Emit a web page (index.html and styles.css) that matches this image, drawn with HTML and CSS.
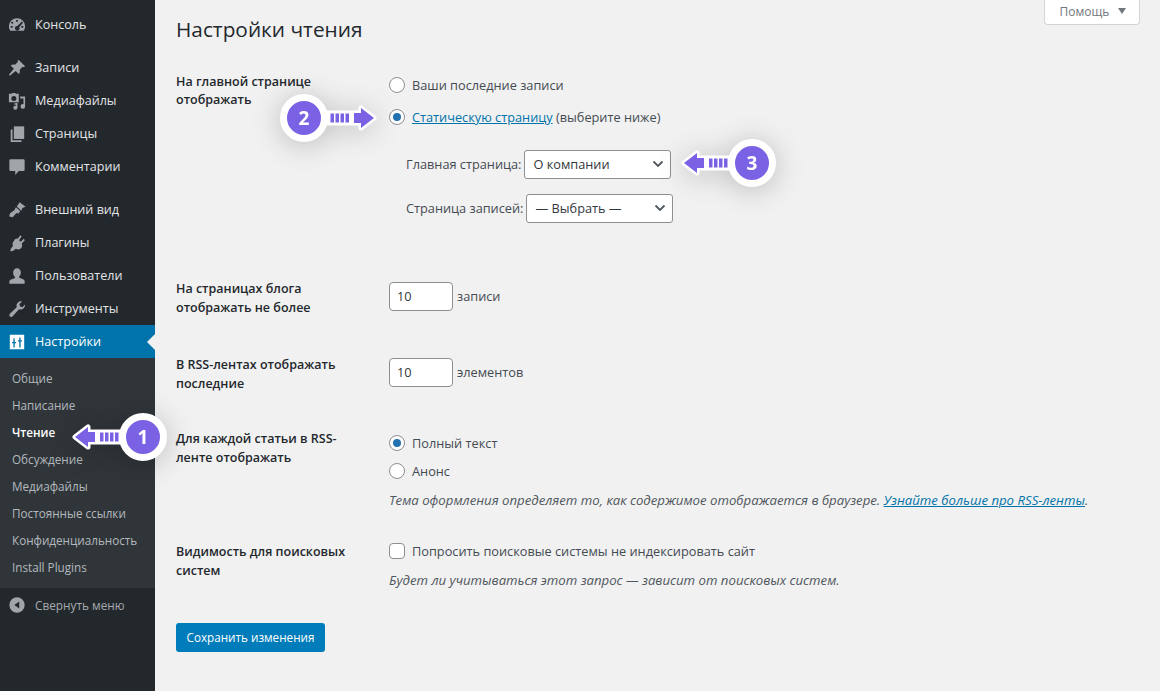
FILE: index.html
```html
<!doctype html>
<html lang="ru">
<head>
  <meta charset="UTF-8">
  <title>Настройки чтения</title>
  <link rel="stylesheet" href="styles.css">
</head>
<body>
  <div class="page">
    <aside class="sidebar">
      <ul class="menu">
        <li class="menu-item first">
          <svg class="menu-icon" viewBox="0 0 20 20"><path fill-rule="evenodd" d="M10 2.500a9 9 0 0 0-9 9c0 2 .6 3.700 1.600 5h14.800c1-1.300 1.600-3 1.600-5a9 9 0 0 0-9-9zM9 4.500h2v2H9zM4.500 6l1.500 1.500-1.300 1.300-1.500-1.500zm11 0l1.300 1.300-4.300 5.200a2.500 2.500 0 1 1-2.200-1.400zM3 11h2.200v2H3zm11.800 0H17v2h-2.200z"/></svg>
          <span>Консоль</span>
        </li>
        <li class="menu-item sep">
          <svg class="menu-icon" viewBox="0 0 20 20"><path d="M12 1l7 7-1.500 1.200-1.200-.5-3.300 3.300c.5 2 .1 3.700-1 4.800l-3.500-3.500L2 18.500 1 17.500l5.500-6.700L3 7.300c1.100-1.100 2.800-1.500 4.800-1l3.300-3.300-.5-1.200z"/></svg>
          <span>Записи</span>
        </li>
        <li class="menu-item">
          <svg class="menu-icon" viewBox="0 0 20 20"><path fill-rule="evenodd" d="M1 2h3l1-1h3l1 1h3v9.500H1zm5.500 2.500a2.800 2.800 0 1 0 0 5.600 2.800 2.800 0 0 0 0-5.600z"/><path d="M13.500 5H19v11a2.500 2.500 0 1 1-1.800-2.400V7.200h-3.700zM7 12.800l3.500-.8v5.500a2.300 2.300 0 1 1-1.800-2.200v-1.500L7 14.200z"/></svg>
          <span>Медиафайлы</span>
        </li>
        <li class="menu-item">
          <svg class="menu-icon" viewBox="0 0 20 20"><path d="M6.500 1.500H18v14H6.500z"/><path d="M3 5h2v12h10v1.800H3z"/></svg>
          <span>Страницы</span>
        </li>
        <li class="menu-item">
          <svg class="menu-icon" viewBox="0 0 20 20"><path d="M3 1.500h14a1.500 1.500 0 0 1 1.500 1.500v10a1.500 1.500 0 0 1-1.500 1.500h-5L8 19v-4.500H3A1.500 1.500 0 0 1 1.500 13V3A1.500 1.500 0 0 1 3 1.500z"/></svg>
          <span>Комментарии</span>
        </li>
        <li class="menu-item sep">
          <svg class="menu-icon" viewBox="0 0 20 20"><path d="M13 1.500l6.500 5-3.500 1.200-1.200 3-5-4.500zM8.800 7l4.700 4.200-1.700 2.800-2.500-.7-4 4.700-4-.8 1-3.700 4.700-3.200z"/></svg>
          <span>Внешний вид</span>
        </li>
        <li class="menu-item">
          <svg class="menu-icon" viewBox="0 0 20 20"><path d="M13.500 1.500l1.700 1.200-3 4.300 2 1.500 3.300-3.200 1.200 1.700-3.500 3.500c1 2.200.5 4.200-1 5.500-1.500 1.300-3.500 1.500-5.500.5l-3.200 2.500-3 .3.500-3 2.500-3c-.8-2.200-.5-4 1-5.500C7.900 5 9.500 4.700 11 5.200z"/></svg>
          <span>Плагины</span>
        </li>
        <li class="menu-item">
          <svg class="menu-icon" viewBox="0 0 20 20"><path d="M10 1.500a4.300 4.300 0 0 1 4.300 4.800c0 2-1 3.500-2.100 4.400v1l5.100 2.100c.8.400 1.200 1 1.200 1.700V18.500H1.500v-2.500c0-.7.400-1.300 1.200-1.700l5.100-2.100v-1C6.700 9.800 5.700 8.300 5.700 6.300A4.300 4.300 0 0 1 10 1.500z"/></svg>
          <span>Пользователи</span>
        </li>
        <li class="menu-item">
          <svg class="menu-icon" viewBox="0 0 20 20"><path d="M19 5.500a5 5 0 0 1-6.800 4.700l-7 7.800a2.100 2.100 0 0 1-3.200-2.800L9.700 8a5 5 0 0 1 6-6.500L12.700 4.700l.7 2.600 2.600.7 2.900-3z"/></svg>
          <span>Инструменты</span>
        </li>
        <li class="menu-item current">
          <svg class="menu-icon" viewBox="0 0 20 20"><path fill-rule="evenodd" d="M2 2h16v16H2zM4.500 10v1.500H6V16h1.500v-4.500H9V10H7.500V6H6v4zM11 8v1.500h1.500V16H14V9.500h1.500V8H14V5h-1.500v3z"/></svg>
          <span>Настройки</span>
        </li>
      </ul>
      <ul class="submenu">
        <li>Общие</li>
        <li>Написание</li>
        <li class="active">Чтение</li>
        <li>Обсуждение</li>
        <li>Медиафайлы</li>
        <li>Постоянные ссылки</li>
        <li>Конфиденциальность</li>
        <li>Install Plugins</li>
      </ul>
      <div class="collapse">
        <svg class="menu-icon" viewBox="0 0 20 20"><path fill-rule="evenodd" d="M10 1.500a8.500 8.500 0 1 1 0 17 8.500 8.500 0 0 1 0-17zM12.500 6L7 10l5.500 4z"/></svg>
        <span>Свернуть меню</span>
      </div>
    </aside>

    <main class="content">
      <div class="help-bar"><button class="help-btn">Помощь <i class="caret"></i></button></div>
      <h1 class="title">Настройки чтения</h1>

      <section class="row row-front">
        <div class="row-label"><div>На главной странице</div><div>отображать</div></div>
        <div class="row-field">
          <label class="choice"><i class="radio"></i>Ваши последние записи</label>
          <label class="choice"><i class="radio on"></i><span><a href="#">Статическую страницу</a> (выберите ниже)</span></label>
          <div class="pick first-pick">Главная страница: <span class="select">О компании<svg viewBox="0 0 12 8"><path d="M1.500 1.500L6 6l4.500-4.500"/></svg></span></div>
          <div class="pick">Страница записей: <span class="select">— Выбрать —<svg viewBox="0 0 12 8"><path d="M1.500 1.500L6 6l4.500-4.500"/></svg></span></div>
        </div>
      </section>

      <section class="row row-posts">
        <div class="row-label">На страницах блога отображать не более</div>
        <div class="row-field inline"><span class="num">10</span>записи</div>
      </section>

      <section class="row row-rss">
        <div class="row-label">В RSS-лентах отображать последние</div>
        <div class="row-field inline"><span class="num">10</span>элементов</div>
      </section>

      <section class="row row-feed">
        <div class="row-label">Для каждой статьи в RSS-ленте отображать</div>
        <div class="row-field">
          <label class="choice"><i class="radio on"></i>Полный текст</label>
          <label class="choice"><i class="radio"></i>Анонс</label>
          <p class="note">Тема оформления определяет то, как содержимое отображается в браузере. <a href="#">Узнайте больше про RSS-ленты</a>.</p>
        </div>
      </section>

      <section class="row row-seo">
        <div class="row-label">Видимость для поисковых систем</div>
        <div class="row-field">
          <label class="choice"><i class="check"></i>Попросить поисковые системы не индексировать сайт</label>
          <p class="note">Будет ли учитываться этот запрос — зависит от поисковых систем.</p>
        </div>
      </section>

      <button class="save">Сохранить изменения</button>
    </main>

    <div class="mark mark-1">
      <svg class="arrow" viewBox="0 0 52 30"><path class="halo" d="M4 15L17 5v5h35v10H17v5z"/><path class="fill" d="M4 15L17 5v5h7v10h-7v5zM29 10.500h3.500v9H29zM34 10.500h3.500v9H34zM39 10.500h3.500v9H39zM44 10.500h3.500v9H44z"/></svg>
      <b class="badge">1</b>
    </div>
    <div class="mark mark-2">
      <b class="badge">2</b>
      <svg class="arrow arrow-right" viewBox="0 0 52 30"><path class="halo" d="M4 15L17 5v5h35v10H17v5z"/><path class="fill" d="M4 15L17 5v5h7v10h-7v5zM29 10.500h3.500v9H29zM34 10.500h3.500v9H34zM39 10.500h3.500v9H39zM44 10.500h3.500v9H44z"/></svg>
    </div>
    <div class="mark mark-3">
      <svg class="arrow" viewBox="0 0 52 30"><path class="halo" d="M4 15L17 5v5h35v10H17v5z"/><path class="fill" d="M4 15L17 5v5h7v10h-7v5zM29 10.500h3.500v9H29zM34 10.500h3.500v9H34zM39 10.500h3.500v9H39zM44 10.500h3.500v9H44z"/></svg>
      <b class="badge">3</b>
    </div>
  </div>
</body>
</html>
```

FILE: styles.css
```css
* {
  box-sizing: border-box;
}
html, body {
  margin: 0;
  height: 100%;
  overflow: hidden;
}
body {
  background: #f1f1f1;
  font-family: "Open Sans", "Noto Sans", "Liberation Sans", sans-serif;
  font-size: 12.750px;
  color: #444b52;
}
.page {
  position: relative;
  display: flex;
  height: 691px;
  overflow: hidden;
}

/* sidebar */
.sidebar {
  flex: 0 0 155px;
  background: #23282d;
  color: #e2e4e6;
}
.menu, .submenu {
  list-style: none;
  margin: 0;
  padding: 0;
}
.menu {
  padding-top: 8px;
}
.menu-item {
  position: relative;
  display: flex;
  align-items: center;
  height: 33px;
  padding-left: 8px;
  gap: 9px;
  font-size: 12.600px;
}
.menu-item.sep {
  margin-top: 10px;
}
.menu-icon {
  flex: none;
  width: 18px;
  height: 18px;
  fill: #a0a5aa;
}
.menu-item.current {
  background: #0073aa;
  color: #fff;
}
.menu-item.current .menu-icon {
  fill: #fff;
}
.menu-item.current::after {
  content: "";
  position: absolute;
  right: 0;
  top: 9px;
  border: 8px solid transparent;
  border-right-color: #f1f1f1;
  border-left-width: 0;
}
.submenu {
  padding: 7px 0 0;
  height: 230px;
  background: #30353a;
  color: #b4b9be;
}
.submenu li {
  height: 27px;
  line-height: 27px;
  padding-left: 12px;
  font-size: 11.700px;
}
.submenu .active {
  color: #fff;
  font-weight: 600;
}
.collapse {
  display: flex;
  align-items: center;
  gap: 9px;
  height: 34px;
  padding-left: 8px;
  color: #a7aaad;
  font-size: 11.800px;
}

/* content */
.content {
  flex: 1;
  padding: 0 20px 0 21px;
}
.help-bar {
  display: flex;
  justify-content: flex-end;
  height: 0;
}
.help-btn {
  flex: none;
  height: 25px;
  width: 96px;
  border: 1px solid #d5d5d5;
  border-top: 0;
  border-radius: 0 0 4px 4px;
  background: #fff;
  color: #72777c;
  font: inherit;
  font-size: 12px;
  padding: 0 0 2px 2px;
}
.caret {
  display: inline-block;
  margin-left: 6px;
  vertical-align: 2px;
  border: 4px solid transparent;
  border-top: 6px solid #72777c;
  border-bottom: 0;
}
.title {
  margin: 0;
  padding-top: 15px;
  height: 65px;
  font-size: 20.800px;
  line-height: 29px;
  font-weight: 400;
  color: #23282d;
}
.row {
  display: grid;
  grid-template-columns: 213px 1fr;
}
.row-label {
  width: 180px;
  margin-top: 1px;
  font-weight: 600;
  font-size: 12.500px;
  line-height: 18.500px;
  color: #23282d;
}
.choice {
  display: flex;
  align-items: center;
  height: 20px;
  gap: 7px;
}
.choice + .choice {
  margin-top: 8px;
}
.row-front {
  height: 214px;
  padding-top: 7px;
}
.row-front .row-label {
  line-height: 18px;
}
.row-front .row-label div {
  width: fit-content;
}
.row-front .choice {
  margin-top: 3px;
}
.row-front .choice + .choice {
  margin-top: 12px;
}
.radio, .check {
  flex: none;
  display: inline-flex;
  align-items: center;
  justify-content: center;
  width: 16px;
  height: 16px;
  background: #fff;
  border: 1px solid #8c8f94;
  border-radius: 50%;
}
.check {
  border-radius: 4px;
}
.radio.on::before {
  content: "";
  width: 8px;
  height: 8px;
  border-radius: 50%;
  background: #2271b1;
}
a {
  color: #0073aa;
}
.pick {
  display: flex;
  align-items: center;
  gap: 3px;
  margin-left: 17px;
  height: 30px;
  margin-top: 14px;
}
.first-pick {
  margin-top: 22px;
}
.select {
  display: flex;
  align-items: center;
  justify-content: space-between;
  width: 147px;
  height: 29px;
  padding: 0 6px 0 8px;
  background: #fff;
  border: 1px solid #8c8f94;
  border-radius: 3px;
  color: #32373c;
}
.select svg {
  width: 12px;
  height: 8px;
  fill: none;
  stroke: #50575e;
  stroke-width: 1.800;
}
.inline {
  display: flex;
  align-items: center;
  gap: 4px;
  height: 30px;
  margin-top: 2px;
}
.num {
  display: flex;
  align-items: center;
  width: 64px;
  height: 29px;
  padding-left: 7px;
  background: #fff;
  border: 1px solid #8c8f94;
  border-radius: 4px;
  color: #32373c;
}
.row-posts {
  height: 76px;
}
.row-rss {
  height: 75px;
}
.row-feed {
  height: 112px;
}
.row-feed .row-label {
  margin-top: 0;
}
.row-feed .row-field {
  padding-top: 3px;
}
.row-seo {
  height: 81px;
}
.row-seo .row-field {
  margin-top: -1px;
}
.note {
  margin: 10px 0 0;
  font-style: italic;
  font-size: 13.200px;
  color: #50575e;
}
.save {
  display: block;
  width: 149px;
  height: 29px;
  padding: 0 0 2px;
  border: 0;
  border-radius: 3px;
  background: #007cba;
  color: #fff;
  font: inherit;
  font-size: 11.700px;
}

/* annotation markers */
.mark {
  position: absolute;
  display: flex;
  align-items: center;
  filter: drop-shadow(0 3px 14px rgba(0, 0, 0, .22));
}
.mark-1 {
  left: 71px;
  top: 413px;
}
.mark-2 {
  left: 280px;
  top: 94px;
}
.mark-3 {
  left: 680px;
  top: 139px;
}
.badge {
  position: relative;
  width: 48px;
  height: 48px;
  margin-left: -4px;
  display: flex;
  align-items: center;
  justify-content: center;
  border: 7px solid #fff;
  border-radius: 50%;
  background: #7b62e4;
  color: #fff;
  font-size: 19px;
  font-weight: 700;
}
.mark-2 .badge {
  margin-left: 0;
}
.arrow {
  flex: none;
  width: 52px;
  height: 30px;
}
.arrow-right {
  margin-left: -2px;
  transform: scaleX(-1);
}
.arrow .halo {
  fill: #fff;
  stroke: #fff;
  stroke-width: 5;
  stroke-linejoin: round;
}
.arrow .fill {
  fill: #7b62e4;
}
```
